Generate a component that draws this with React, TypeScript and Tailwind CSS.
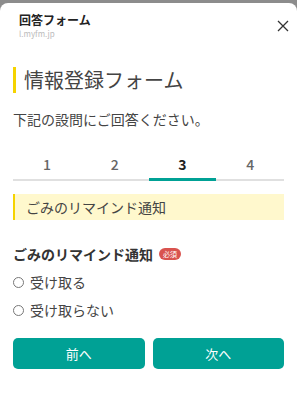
import React from "react";

const font = { fontFamily: '"Noto Sans CJK JP", "Noto Sans", sans-serif' };

export default function App() {
  return (
    <div className="w-[297px] h-[400px] bg-[#8c8c8c] overflow-hidden" style={font}>
      <div className="mt-[3px] h-[397px] bg-white rounded-t-[8px] flex flex-col">
        {/* header */}
        <div className="h-[44px] pl-[19px] pr-[8px] pt-[8px] flex justify-between">
          <div className="flex flex-col">
            <span className="text-[12px] leading-[18px] font-bold text-[#222]">回答フォーム</span>
            <span className="text-[8px] leading-[10px] text-[#bbb]">l.myfm.jp</span>
          </div>
          <svg width="12" height="12" viewBox="0 0 12 12" className="mt-[9px]">
            <path d="M1 1 L11 11 M11 1 L1 11" stroke="#333" strokeWidth="1.3" />
          </svg>
        </div>
        <div className="px-[13px]">
          <div className="mt-[20px] flex items-center h-[26px]">
            <div className="w-[3px] h-[26px] bg-[#f5d300]" />
            <span className="ml-[8px] text-[20px] leading-[26px] text-[#444]">情報登録フォーム</span>
          </div>
          <div className="mt-[16px] text-[14px] leading-[20px] text-[#444]">下記の設問にご回答ください。</div>
          <div className="mt-[25px] grid grid-cols-4 text-[14px] text-[#666] font-medium">
            {["1", "2", "3", "4"].map((n, i) => (
              <div key={n} className="flex flex-col items-center">
                <span className={`leading-[20px] pb-[4px] ${i === 2 ? "text-[#222] font-semibold" : ""}`}>{n}</span>
                <div className={`w-full ${i === 2 ? "h-[3px] bg-[#00a195]" : "h-[3px] border-b-2 border-[#e0e0e0]"}`} />
              </div>
            ))}
          </div>
          <div className="mt-[13px] h-[26px] bg-[#fff8cd] border-l-2 border-[#f5d300] flex items-center pl-[11px] text-[14px] text-[#444]">
            ごみのリマインド通知
          </div>
          <div className="mt-[24px] flex items-center">
            <span className="text-[14px] leading-[20px] font-bold text-[#333]">ごみのリマインド通知</span>
            <span className="ml-[6px] bg-[#d9534f] text-white text-[7px] leading-[12px] rounded-full px-[4px]">必須</span>
          </div>
          <div className="mt-[8px] flex flex-col gap-[8px]">
            {["受け取る", "受け取らない"].map((t) => (
              <label key={t} className="flex items-center h-[20px]">
                <span className="w-[11px] h-[11px] rounded-full border border-[#777] box-border" />
                <span className="ml-[6px] text-[14px] text-[#444]">{t}</span>
              </label>
            ))}
          </div>
          <div className="mt-[18px] flex gap-[8px]">
            <button className="flex-1 h-[31px] rounded-[5px] bg-[#00a195] text-white text-[13px]">前へ</button>
            <button className="flex-1 h-[31px] rounded-[5px] bg-[#00a195] text-white text-[13px]">次へ</button>
          </div>
        </div>
      </div>
    </div>
  );
}
